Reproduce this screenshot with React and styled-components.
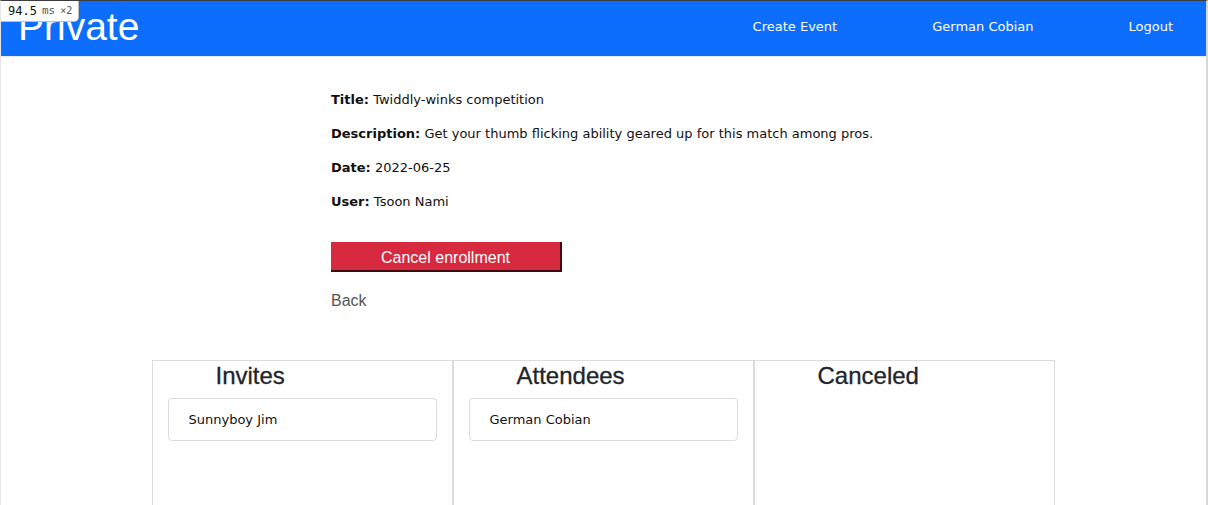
import React from "react";
import styled, { createGlobalStyle } from "styled-components";

const Global = createGlobalStyle`
  html, body { margin: 0; padding: 0; background: #fff; }
  body { font-family: "DejaVu Sans", Verdana, sans-serif; overflow: hidden; }
  * { box-sizing: border-box; }
`;

const Frame = styled.div`
  position: relative;
  width: 1208px;
  height: 505px;
  border-top: 1px solid #3d3d3d;
  border-left: 1px solid #e6e6e6;
  border-right: 2px solid #d9d9d9;
  overflow: hidden;
`;

const Badge = styled.div`
  position: absolute;
  top: 0;
  left: 0;
  height: 21px;
  padding: 0 6px 0 7px;
  display: flex;
  align-items: center;
  gap: 5px;
  background: #fff;
  border: 1px solid #bdbdbd;
  border-top: none;
  border-left: none;
  border-bottom-right-radius: 5px;
  font-family: "DejaVu Sans Mono", monospace;
  font-size: 12px;
  line-height: 14px;
  color: #111;
  z-index: 2;
`;

const BadgeUnit = styled.span`
  color: #555;
  font-size: ${(p) => p.$size || 11}px;
`;

const Navbar = styled.nav`
  height: 56px;
  background: #0d6efd;
  border-bottom: 1px solid #e9ecef;
  display: flex;
  align-items: center;
  justify-content: space-between;
  padding: 0 33px 0 17px;
`;

const Brand = styled.div`
  font-family: "Liberation Sans", Arial, sans-serif;
  font-size: 39px;
  color: #fff;
  line-height: 1;
  margin-top: -5px;
`;

const NavLinks = styled.div`
  display: flex;
  gap: 95px;
`;

const NavLink = styled.a`
  color: #fff;
  font-size: 13px;
  text-decoration: none;
  margin-top: -5px;
`;

const Details = styled.section`
  padding: 34px 0 0 330px;
`;

const Field = styled.p`
  margin: 0 0 16px;
  font-size: 13px;
  line-height: 18px;
  color: #111;
`;

const Label = styled.strong`
  font-weight: bold;
`;

const DangerButton = styled.button`
  margin-top: 15px;
  width: 231px;
  height: 30px;
  background: #d72a3f;
  color: #fff;
  border: 2px outset #8f1b29;
  border-top: none;
  border-left: none;
  font-family: "Liberation Sans", Arial, sans-serif;
  font-size: 16px;
  padding: 3px 0 0;
`;

const BackLink = styled.div`
  margin-top: 20px;
  font-family: "Liberation Sans", Arial, sans-serif;
  font-size: 16px;
  color: #555;
`;

const Columns = styled.div`
  display: grid;
  grid-template-columns: repeat(3, 301px);
  justify-content: center;
  margin-top: 50px;
  padding-right: 1px;
`;

const Column = styled.div`
  height: 200px;
  border: 1px solid #dcdcdc;
  padding: 0 15px;
`;

const ColumnTitle = styled.h3`
  margin: 1px 0 0 48px;
  font-family: "Liberation Sans", Arial, sans-serif;
  font-weight: normal;
  font-size: 24px;
  line-height: 28px;
  color: #212529;
  -webkit-text-stroke: 0.3px #212529;
`;

const Person = styled.div`
  margin-top: 8px;
  height: 43px;
  border: 1px solid #dcdcdc;
  border-radius: 4px;
  padding: 0 20px;
  display: flex;
  align-items: center;
  font-size: 13px;
  color: #111;
`;

const columns = [
  { title: "Invites", people: ["Sunnyboy Jim"] },
  { title: "Attendees", people: ["German Cobian"] },
  { title: "Canceled", people: [] },
];

export default function App() {
  return (
    <>
      <Global />
      <Frame>
        <Badge>
          94.5<BadgeUnit>ms</BadgeUnit>
          <BadgeUnit $size={10}>×2</BadgeUnit>
        </Badge>
        <Navbar>
          <Brand>Private</Brand>
          <NavLinks>
            <NavLink>Create Event</NavLink>
            <NavLink>German Cobian</NavLink>
            <NavLink>Logout</NavLink>
          </NavLinks>
        </Navbar>
        <Details>
          <Field><Label>Title:</Label> Twiddly-winks competition</Field>
          <Field><Label>Description:</Label> Get your thumb flicking ability geared up for this match among pros.</Field>
          <Field><Label>Date:</Label> 2022-06-25</Field>
          <Field><Label>User:</Label> Tsoon Nami</Field>
          <DangerButton>Cancel enrollment</DangerButton>
          <BackLink>Back</BackLink>
        </Details>
        <Columns>
          {columns.map((c) => (
            <Column key={c.title}>
              <ColumnTitle>{c.title}</ColumnTitle>
              {c.people.map((p) => (
                <Person key={p}>{p}</Person>
              ))}
            </Column>
          ))}
        </Columns>
      </Frame>
    </>
  );
}
